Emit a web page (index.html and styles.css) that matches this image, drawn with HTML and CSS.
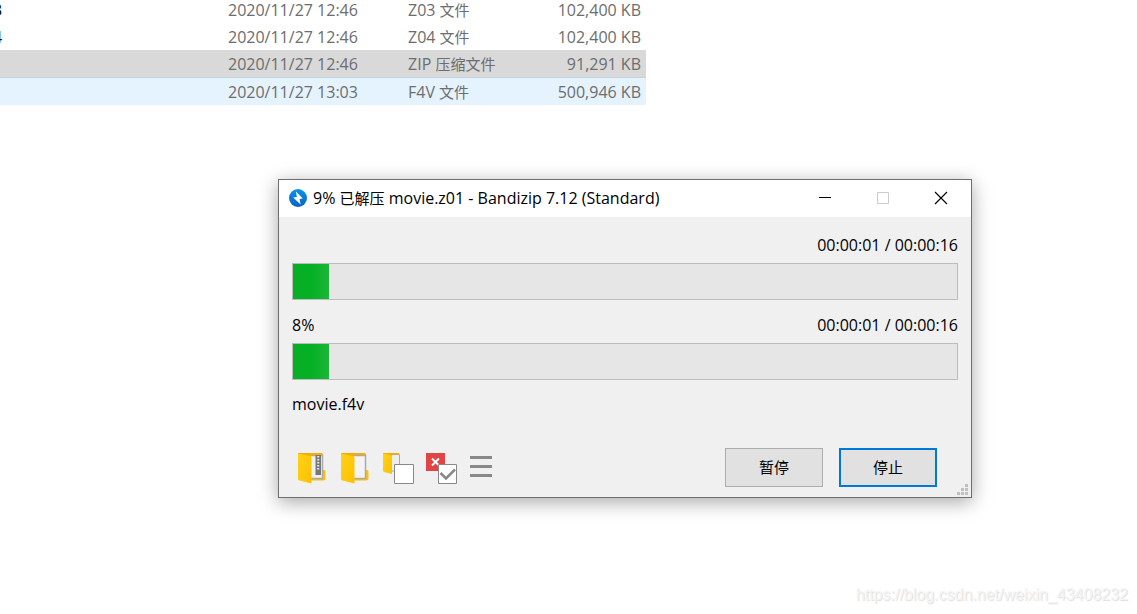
FILE: index.html
```html
<!DOCTYPE html>
<html lang="zh-CN">
<head>
    <meta charset="UTF-8">
    <meta name="viewport" content="width=device-width, initial-scale=1.0">
    <title>Bandizip</title>
    <link rel="stylesheet" href="styles.css">
</head>
<body>
    <!-- File list -->
    <div class="explorer">
        <table class="file-list">
            <tr>
                <td class="name">3</td>
                <td class="date">2020/11/27 12:46</td>
                <td class="type">Z03 <span class="zh">文件</span></td>
                <td class="size">102,400 KB</td>
            </tr>
            <tr>
                <td class="name">4</td>
                <td class="date">2020/11/27 12:46</td>
                <td class="type">Z04 <span class="zh">文件</span></td>
                <td class="size">102,400 KB</td>
            </tr>
            <tr class="selected">
                <td class="name"></td>
                <td class="date">2020/11/27 12:46</td>
                <td class="type">ZIP <span class="zh">压缩文件</span></td>
                <td class="size">91,291 KB</td>
            </tr>
            <tr class="hovered">
                <td class="name"></td>
                <td class="date">2020/11/27 13:03</td>
                <td class="type">F4V <span class="zh">文件</span></td>
                <td class="size">500,946 KB</td>
            </tr>
        </table>
    </div>

    <!-- Extract dialog -->
    <div class="dialog" role="dialog" aria-labelledby="dialog-title">
        <div class="titlebar">
            <svg class="logo" width="20" height="20" viewBox="0 0 20 20">
                <defs>
                    <linearGradient id="blue" x1="0" y1="0" x2="0" y2="1">
                        <stop offset="0" stop-color="#0c94e4"/>
                        <stop offset="1" stop-color="#0a60c8"/>
                    </linearGradient>
                    <linearGradient id="yellow" x1="0" y1="0" x2="1" y2="1">
                        <stop offset="0" stop-color="#ffd21a"/>
                        <stop offset="1" stop-color="#fcc000"/>
                    </linearGradient>
                </defs>
                <circle cx="10" cy="10" r="9" fill="url(#blue)"/>
                <path d="M8 3.5L14.8 10.6L11.6 11L12.6 16.5L5.2 9.4L8.8 9Z" fill="#fff"/>
            </svg>
            <span class="title" id="dialog-title">9% <span class="zh">已解压</span> movie.z01 - Bandizip 7.12 (Standard)</span>
            <div class="window-buttons">
                <button aria-label="最小化"><svg width="14" height="14" viewBox="0 0 14 14"><path d="M1 6.5H13" stroke="#000"/></svg></button>
                <button aria-label="最大化" disabled><svg width="14" height="14" viewBox="0 0 14 14"><path d="M1.5 1.5H12.5V12.5H1.5Z" fill="none" stroke="#ccc"/></svg></button>
                <button aria-label="关闭"><svg width="14" height="14" viewBox="0 0 14 14"><path d="M1 1L13 13M13 1L1 13" stroke="#000" stroke-width="1.2"/></svg></button>
            </div>
        </div>

        <div class="content">
            <div class="status">
                <label for="total"></label>
                <span>00:00:01 / 00:00:16</span>
            </div>
            <progress id="total" value="36" max="664" aria-label="总进度"></progress>
            <div class="status second">
                <label for="current">8%</label>
                <span>00:00:01 / 00:00:16</span>
            </div>
            <progress id="current" value="36" max="664"></progress>
            <div class="file">movie.f4v</div>

            <div class="footer">
                <div class="tools">
                    <button aria-label="打开压缩文件">
                        <svg width="32" height="34" viewBox="0 0 32 34">
                            <path d="M16 20H27V19H29Q30.500 19 30.500 21V27Q30.500 29.500 28 29.500H16Z" fill="#fcc000"/>
                            <path d="M14 4.500H27.500V27.500H14Z" fill="#f0f0f0" stroke="#aaa" stroke-width="1.500"/>
                            <path d="M20.500 4H26V24H20.500Z" fill="#777"/>
                            <path d="M23.200 5V20" stroke="#eee" stroke-width="2" stroke-dasharray="1.500 1.500"/>
                            <path d="M3 2H26.500Q28 2 28 4H16V10L3 4Z" fill="#f5ae00"/>
                            <path d="M3 2.500L14.500 5Q16.500 5.500 16.500 7V32.500L4.500 29.500Q3 29 3 28Z" fill="url(#yellow)"/>
                        </svg>
                    </button>
                    <button aria-label="打开文件夹">
                        <svg width="32" height="34" viewBox="0 0 32 34">
                            <path d="M16 20H27V19H29Q30.500 19 30.500 21V27Q30.500 29.500 28 29.500H16Z" fill="#fcc000"/>
                            <path d="M14 4.500H27.500V27.500H14Z" fill="#f3f3f3" stroke="#aaa" stroke-width="1.500"/>
                            <path d="M3 2H26.500Q28 2 28 4H16V10L3 4Z" fill="#f5ae00"/>
                            <path d="M3 2.500L14.500 5Q16.500 5.500 16.500 7V32.500L4.500 29.500Q3 29 3 28Z" fill="url(#yellow)"/>
                        </svg>
                    </button>
                    <button aria-label="完成后打开文件夹">
                        <svg width="34" height="34" viewBox="-2 0 34 34">
                            <path d="M8 3.500H16.500V20H8Z" fill="#eee" stroke="#aaa"/>
                            <path d="M0 2H16V3.500H9V7L0 4Z" fill="#f5ae00"/>
                            <path d="M0 2.500L7.500 4Q9 4.500 9 6V23L1 21Q0 20.500 0 20Z" fill="url(#yellow)"/>
                            <path d="M11.500 13.500H30.500V32.500H11.500Z" fill="#fff" stroke="#888"/>
                        </svg>
                    </button>
                    <button aria-label="完成后关闭">
                        <svg width="32" height="34" viewBox="0 0 32 34">
                            <path d="M0 2H19V20H0Z" fill="#e04444"/>
                            <path d="M6 7.500L13 14.500M13 7.500L6 14.500" stroke="#fff" stroke-width="2"/>
                            <path d="M12.500 13.500H30.500V32.500H12.500Z" fill="#fff" stroke="#888"/>
                            <path d="M14.500 22L20 27.500L29 18.500" fill="none" stroke="#888" stroke-width="2.500"/>
                        </svg>
                    </button>
                    <button aria-label="菜单">
                        <svg width="32" height="34" viewBox="0 0 32 34">
                            <path d="M1 6.500H23M1 15.500H23M1 24.500H23" stroke="#888" stroke-width="3"/>
                        </svg>
                    </button>
                </div>
                <div class="actions">
                    <button>暂停</button>
                    <button class="primary">停止</button>
                </div>
            </div>
        </div>

        <svg class="grip" width="11" height="11" viewBox="0 0 11 11" fill="#bfbfbf">
            <path d="M8 0h3v3h-3zM4 4h3v3h-3zM8 4h3v3h-3zM0 8h3v3h-3zM4 8h3v3h-3zM8 8h3v3h-3z"/>
        </svg>
    </div>

    <div class="watermark">https://blog.csdn.net/weixin_43408232</div>
</body>
</html>
```

FILE: styles.css
```css
* {
    box-sizing: border-box;
}
body {
    margin: 0;
    min-height: 100vh;
    overflow: hidden;
    background-color: #fff;
    color: #000;
    font-family: "Open Sans", "Noto Sans CJK SC", sans-serif;
    font-size: 16px;
    line-height: 20px;
}
button {
    margin: 0;
    padding: 0;
    border: none;
    background: none;
    font-family: inherit;
    font-size: 15px;
}
svg {
    display: block;
}
.zh {
    font-size: 15px;
}

/* File list */
.explorer {
    overflow: hidden;
}
.file-list {
    width: 653px;
    margin: -4px 0 0 -7px; /* scrolled a little */
    border-spacing: 0;
    table-layout: fixed;
    color: #6d6d6d;
}
.file-list td {
    height: 27px;
    padding: 0;
    white-space: nowrap;
}
.file-list .name {
    width: 235px;
    color: #000;
}
.file-list .date {
    width: 180px;
}
.file-list .size {
    padding-right: 5px;
    text-align: right;
}
.selected {
    background-color: #d9d9d9;
}
.selected td {
    height: 28px;
    border-bottom: 1px solid #c3cfd9;
}
.hovered {
    background-color: #e5f3ff;
}

/* Dialog */
.dialog {
    position: absolute;
    top: 179px;
    left: 278px;
    right: 165px;
    border: 1px solid #6e6e6e;
    background-color: #f0f0f0;
    box-shadow: 0 4px 18px rgba(0, 0, 0, 0.35);
}
.titlebar {
    display: flex;
    align-items: center;
    height: 37px;
    padding: 0 1px 1px 9px;
    background-color: #fff;
}
.title {
    flex: 1;
    margin-left: 5px;
    white-space: nowrap;
}
.window-buttons {
    display: flex;
}
.window-buttons button {
    display: flex;
    align-items: center;
    justify-content: center;
    width: 58px;
    height: 36px;
}
.content {
    padding: 18px 13px 10px;
}
.status {
    display: flex;
    justify-content: space-between;
    height: 20px;
    margin-bottom: 8px;
}
.second {
    margin-top: 15px;
}
progress {
    display: block;
    width: 100%;
    height: 37px;
    border: 1px solid #bcbcbc;
    background-color: #e6e6e6;
    -webkit-appearance: none;
    appearance: none;
}
progress::-webkit-progress-bar {
    background-color: #e6e6e6;
}
progress::-webkit-progress-value {
    background: linear-gradient(to right, #06b025 50%, #1cb638);
}
.file {
    margin-top: 14px;
}
.footer {
    display: flex;
    justify-content: space-between;
    margin-top: 34px;
}
.tools {
    display: flex;
    align-items: flex-start;
    gap: 11px;
    padding: 3px 0 0 3px;
}
.actions {
    display: flex;
    gap: 16px;
    padding-right: 21px;
}
.actions button {
    width: 98px;
    height: 39px;
    padding-bottom: 2px;
    border: 1px solid #adadad;
    background-color: #e1e1e1;
}
.actions .primary {
    border: 2px solid #0078d7;
}
.grip {
    position: absolute;
    right: 3px;
    bottom: 2px;
}

.watermark {
    position: absolute;
    right: 9px;
    bottom: 9px;
    color: #f4f4f4;
    font-family: "Liberation Sans", sans-serif;
    font-size: 16px;
    text-shadow: 1px 1px 1px #ddd;
}
```
